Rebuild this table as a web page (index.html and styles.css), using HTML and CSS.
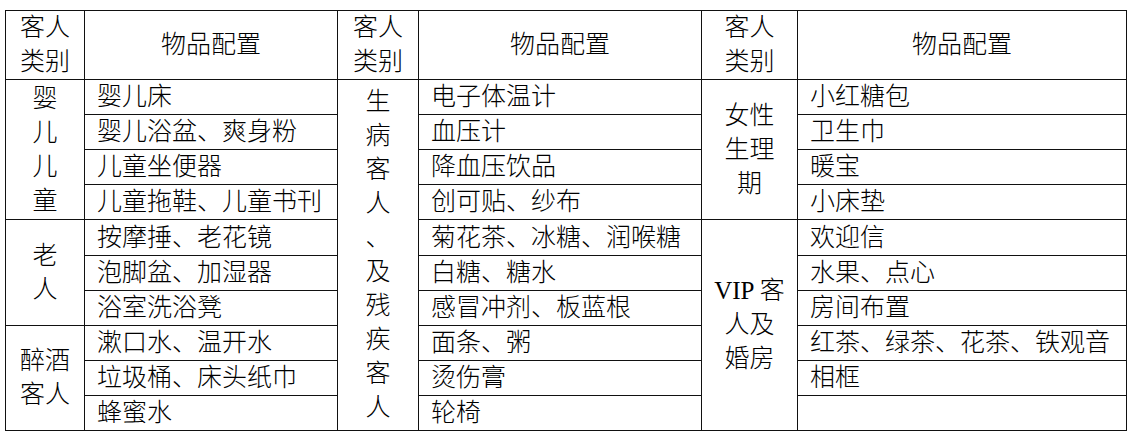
FILE: index.html
```html
<!DOCTYPE html>
<html lang="zh-CN">
<head>
<meta charset="utf-8">
<link rel="stylesheet" href="styles.css">
</head>
<body>
<table class="grid">
  <colgroup>
    <col class="c1"><col class="c2"><col class="c3"><col class="c4"><col class="c5"><col class="c6">
  </colgroup>
  <tr class="head">
    <th class="cat">客人<br>类别</th>
    <th>物品配置</th>
    <th class="cat">客人<br>类别</th>
    <th>物品配置</th>
    <th class="cat">客人<br>类别</th>
    <th>物品配置</th>
  </tr>
  <tr>
    <td class="cat" rowspan="4">婴<br>儿<br>儿<br>童</td>
    <td class="item">婴儿床</td>
    <td class="cat tall" rowspan="10">生<br>病<br>客<br>人<br>、<br>及<br>残<br>疾<br>客<br>人</td>
    <td class="item">电子体温计</td>
    <td class="cat" rowspan="4">女性<br>生理<br>期</td>
    <td class="item">小红糖包</td>
  </tr>
  <tr>
    <td class="item">婴儿浴盆、爽身粉</td>
    <td class="item">血压计</td>
    <td class="item">卫生巾</td>
  </tr>
  <tr>
    <td class="item">儿童坐便器</td>
    <td class="item">降血压饮品</td>
    <td class="item">暖宝</td>
  </tr>
  <tr>
    <td class="item">儿童拖鞋、儿童书刊</td>
    <td class="item">创可贴、纱布</td>
    <td class="item">小床垫</td>
  </tr>
  <tr class="wide">
    <td class="cat" rowspan="3">老<br>人</td>
    <td class="item">按摩捶、老花镜</td>
    <td class="item">菊花茶、冰糖、润喉糖</td>
    <td class="cat" rowspan="6">VIP 客<br>人及<br>婚房</td>
    <td class="item">欢迎信</td>
  </tr>
  <tr>
    <td class="item">泡脚盆、加湿器</td>
    <td class="item">白糖、糖水</td>
    <td class="item">水果、点心</td>
  </tr>
  <tr>
    <td class="item">浴室洗浴凳</td>
    <td class="item">感冒冲剂、板蓝根</td>
    <td class="item">房间布置</td>
  </tr>
  <tr>
    <td class="cat" rowspan="3">醉酒<br>客人</td>
    <td class="item">漱口水、温开水</td>
    <td class="item">面条、粥</td>
    <td class="item">红茶、绿茶、花茶、铁观音</td>
  </tr>
  <tr>
    <td class="item">垃圾桶、床头纸巾</td>
    <td class="item">烫伤膏</td>
    <td class="item">相框</td>
  </tr>
  <tr>
    <td class="item">蜂蜜水</td>
    <td class="item">轮椅</td>
    <td class="item"></td>
  </tr>
</table>
</body>
</html>
```

FILE: styles.css
```css
html, body {
  margin: 0;
  padding: 0;
  background: #ffffff;
}

body {
  padding: 10px 0 0 5px;
  font-family: "Liberation Serif", "Noto Sans CJK SC", serif;
  color: #000000;
}

.grid {
  border-collapse: collapse;
  table-layout: fixed;
  width: 1121px;
  font-size: 25px;
  font-weight: 300;
  line-height: 34px;
}

.c1 { width: 79px; }
.c2 { width: 253px; }
.c3 { width: 81px; }
.c4 { width: 283px; }
.c5 { width: 96px; }
.c6 { width: 329px; }

.grid th,
.grid td {
  border: 1px solid #111111;
  padding: 0;
  font-weight: 300;
  white-space: nowrap;
}

.grid .head th {
  height: 68px;
  text-align: center;
  vertical-align: middle;
}

.grid tr:not(.head) {
  height: 35px;
}

.grid td {
  height: 34px;
}

.grid tr.wide {
  height: 36px;
}

.grid tr.wide td {
  height: 35px;
}

.grid .cat {
  text-align: center;
  vertical-align: middle;
}

.grid .item {
  text-align: left;
  vertical-align: middle;
  padding: 0 12px;
}
```
